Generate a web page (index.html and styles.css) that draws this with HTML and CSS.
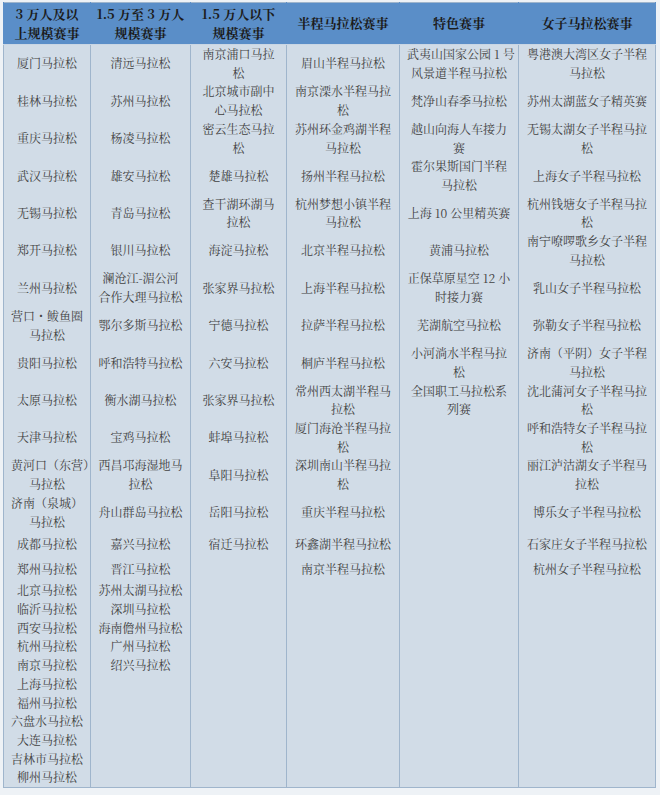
FILE: index.html
```html
<!DOCTYPE html>
<html lang="zh-CN">
<head>
<meta charset="utf-8">
<title>赛事列表</title>
<link rel="stylesheet" href="styles.css">
</head>
<body>
<table class="races">
  <colgroup>
    <col class="c1"><col class="c2"><col class="c3"><col class="c4"><col class="c5"><col class="c6">
  </colgroup>
  <thead>
    <tr>
      <th>3 万人及以<br>上规模赛事</th>
      <th>1.5 万至 3 万人<br>规模赛事</th>
      <th>1.5 万人以下<br>规模赛事</th>
      <th>半程马拉松赛事</th>
      <th>特色赛事</th>
      <th>女子马拉松赛事</th>
    </tr>
  </thead>
  <tbody>
    <tr><td>厦门马拉松</td><td>清远马拉松</td><td>南京浦口马拉<br>松</td><td>眉山半程马拉松</td><td>武夷山国家公园 1 号<br>风景道半程马拉松</td><td>粤港澳大湾区女子半程<br>马拉松</td></tr>
    <tr><td>桂林马拉松</td><td>苏州马拉松</td><td>北京城市副中<br>心马拉松</td><td>南京溧水半程马拉<br>松</td><td>梵净山春季马拉松</td><td>苏州太湖蓝女子精英赛</td></tr>
    <tr><td>重庆马拉松</td><td>杨凌马拉松</td><td>密云生态马拉<br>松</td><td>苏州环金鸡湖半程<br>马拉松</td><td>越山向海人车接力<br>赛</td><td>无锡太湖女子半程马拉<br>松</td></tr>
    <tr><td>武汉马拉松</td><td>雄安马拉松</td><td>楚雄马拉松</td><td>扬州半程马拉松</td><td>霍尔果斯国门半程<br>马拉松</td><td>上海女子半程马拉松</td></tr>
    <tr><td>无锡马拉松</td><td>青岛马拉松</td><td>查干湖环湖马<br>拉松</td><td>杭州梦想小镇半程<br>马拉松</td><td>上海 10 公里精英赛</td><td>杭州钱塘女子半程马拉<br>松</td></tr>
    <tr><td>郑开马拉松</td><td>银川马拉松</td><td>海淀马拉松</td><td>北京半程马拉松</td><td>黄浦马拉松</td><td>南宁嘹啰歌乡女子半程<br>马拉松</td></tr>
    <tr><td>兰州马拉松</td><td>澜沧江-湄公河<br>合作大理马拉松</td><td>张家界马拉松</td><td>上海半程马拉松</td><td>正保草原星空 12 小<br>时接力赛</td><td>乳山女子半程马拉松</td></tr>
    <tr><td>营口・鲅鱼圈<br>马拉松</td><td>鄂尔多斯马拉松</td><td>宁德马拉松</td><td>拉萨半程马拉松</td><td>芜湖航空马拉松</td><td>弥勒女子半程马拉松</td></tr>
    <tr><td>贵阳马拉松</td><td>呼和浩特马拉松</td><td>六安马拉松</td><td>桐庐半程马拉松</td><td>小河淌水半程马拉<br>松</td><td>济南（平阴）女子半程<br>马拉松</td></tr>
    <tr><td>太原马拉松</td><td>衡水湖马拉松</td><td>张家界马拉松</td><td>常州西太湖半程马<br>拉松</td><td>全国职工马拉松系<br>列赛</td><td>沈北蒲河女子半程马拉<br>松</td></tr>
    <tr><td>天津马拉松</td><td>宝鸡马拉松</td><td>蚌埠马拉松</td><td>厦门海沧半程马拉<br>松</td><td></td><td>呼和浩特女子半程马拉<br>松</td></tr>
    <tr><td>黄河口（东营）<br>马拉松</td><td>西昌邛海湿地马<br>拉松</td><td>阜阳马拉松</td><td>深圳南山半程马拉<br>松</td><td></td><td>丽江泸沽湖女子半程马<br>拉松</td></tr>
    <tr><td>济南（泉城）<br>马拉松</td><td>舟山群岛马拉松</td><td>岳阳马拉松</td><td>重庆半程马拉松</td><td></td><td>博乐女子半程马拉松</td></tr>
    <tr class="tall"><td>成都马拉松</td><td>嘉兴马拉松</td><td>宿迁马拉松</td><td>环鑫湖半程马拉松</td><td></td><td>石家庄女子半程马拉松</td></tr>
    <tr class="mid"><td>郑州马拉松</td><td>晋江马拉松</td><td></td><td>南京半程马拉松</td><td></td><td>杭州女子半程马拉松</td></tr>
    <tr><td>北京马拉松</td><td>苏州太湖马拉松</td><td></td><td></td><td></td><td></td></tr>
    <tr><td>临沂马拉松</td><td>深圳马拉松</td><td></td><td></td><td></td><td></td></tr>
    <tr><td>西安马拉松</td><td>海南儋州马拉松</td><td></td><td></td><td></td><td></td></tr>
    <tr><td>杭州马拉松</td><td>广州马拉松</td><td></td><td></td><td></td><td></td></tr>
    <tr><td>南京马拉松</td><td>绍兴马拉松</td><td></td><td></td><td></td><td></td></tr>
    <tr><td>上海马拉松</td><td></td><td></td><td></td><td></td><td></td></tr>
    <tr><td>福州马拉松</td><td></td><td></td><td></td><td></td><td></td></tr>
    <tr><td>六盘水马拉松</td><td></td><td></td><td></td><td></td><td></td></tr>
    <tr><td>大连马拉松</td><td></td><td></td><td></td><td></td><td></td></tr>
    <tr><td>吉林市马拉松</td><td></td><td></td><td></td><td></td><td></td></tr>
    <tr><td>柳州马拉松</td><td></td><td></td><td></td><td></td><td></td></tr>
  </tbody>
</table>
</body>
</html>
```

FILE: styles.css
```css
html, body {
  margin: 0;
  padding: 0;
  background: #eef2f6;
}

body {
  padding: 2px 0 0 3px;
}

.races {
  border-collapse: collapse;
  table-layout: fixed;
  width: 652px;
  font-family: "Noto Serif CJK SC", "Noto Sans CJK SC", sans-serif;
  font-size: 12px;
  line-height: 18.7px;
  color: #424242;
  background: #d1dce7;
  border: 1px solid #9fb5cc;
}

.c1 { width: 87px; }
.c2 { width: 100px; }
.c3 { width: 96px; }
.c4 { width: 113px; }
.c5 { width: 119px; }
.c6 { width: 137px; }

.races th {
  background: #5a8ec8;
  color: #1c1c1c;
  font-weight: 700;
  font-size: 13px;
  line-height: 18.5px;
  height: 41px;
  padding: 0 4px;
  text-align: center;
  vertical-align: middle;
  border-left: 1px solid #5a8ec8;
  border-right: 1px solid #5a8ec8;
  border-bottom: 1px solid #c9d6e4;
}

.races td {
  padding: 0 7px;
  text-align: center;
  vertical-align: middle;
  border-left: 1px solid #9fb5cc;
  border-right: 1px solid #9fb5cc;
  white-space: nowrap;
}

.races tr.tall td { height: 26px; }
.races tr.mid td { height: 24px; }
```
